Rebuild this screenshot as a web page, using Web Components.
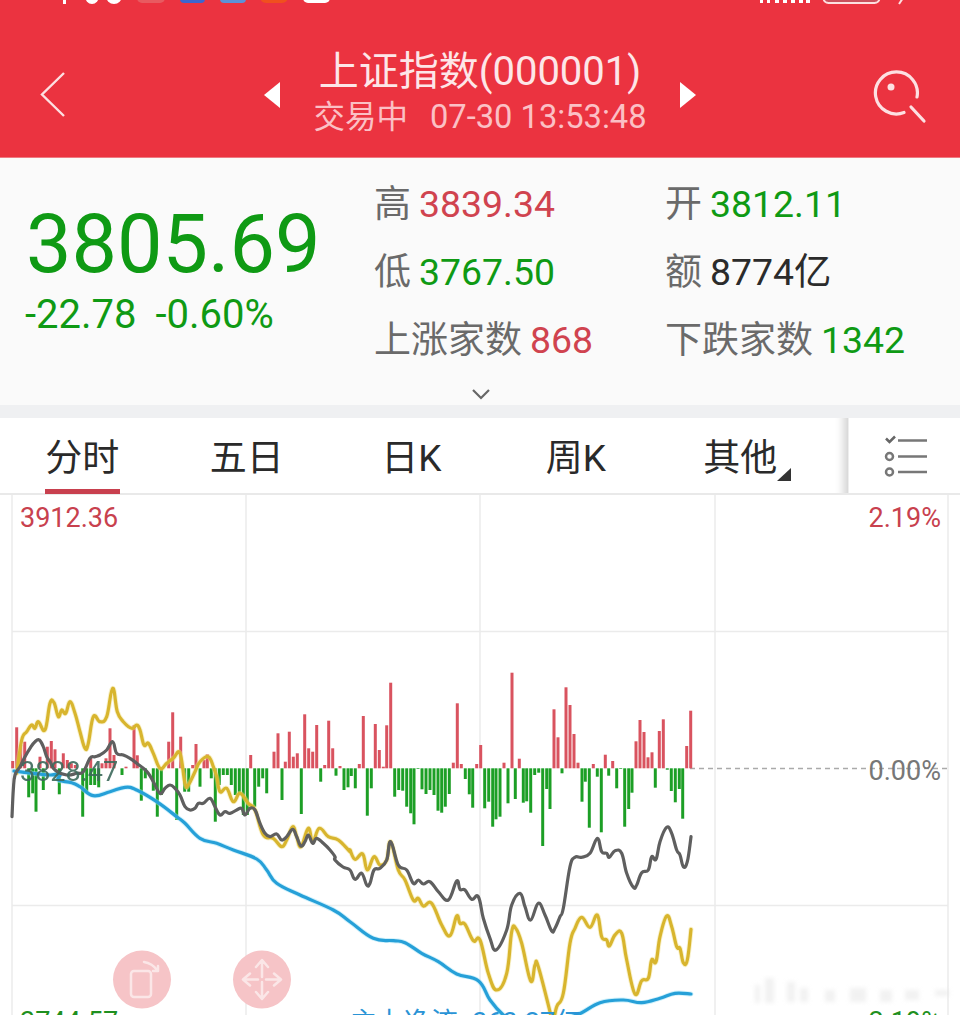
<!DOCTYPE html>
<html lang="zh"><head><meta charset="utf-8"><title>上证指数</title>
<style>
html,body{margin:0;padding:0;height:1015px;overflow:hidden;background:#fff;font-family:Roboto,"Noto Sans CJK SC",sans-serif}
body{display:flex;flex-direction:column}
</style></head><body>
<quote-header name="上证指数(000001)" state="交易中" time="07-30 13:53:48"></quote-header>
<quote-summary price="3805.69" delta="-22.78" pct="-0.60%">
  <stat-item label="高" value="3839.34" tone="up"></stat-item>
  <stat-item label="开" value="3812.11" tone="down"></stat-item>
  <stat-item label="低" value="3767.50" tone="down"></stat-item>
  <stat-item label="额" value="8774亿" tone="flat"></stat-item>
  <stat-item label="上涨家数" value="868" tone="up"></stat-item>
  <stat-item label="下跌家数" value="1342" tone="down"></stat-item>
</quote-summary>
<chart-tabs>
  <tab-item active>分时</tab-item>
  <tab-item>五日</tab-item>
  <tab-item>日K</tab-item>
  <tab-item>周K</tab-item>
  <tab-item menu>其他</tab-item>
</chart-tabs>
<intraday-chart></intraday-chart>
<script>
const FONT='Roboto,"Noto Sans CJK SC",sans-serif';
class QuoteHeader extends HTMLElement{
  connectedCallback(){
    const s=this.attachShadow({mode:'open'});
    s.innerHTML=`<style>
    :host{display:block;height:157px;background:#eb3340;border-bottom:1px solid #ee7a82;font-family:${FONT};flex:none}
    .status{display:block;height:5px}
    .row{display:grid;grid-template-columns:1fr auto 1fr;align-items:center;height:152px;padding:28px 33px 0 40px;box-sizing:border-box}
    .mid{display:flex;align-items:center;gap:33px;margin-left:-7px}
    .txt{display:flex;flex-direction:column;align-items:center;margin-bottom:4px}
    .t{font-size:40px;line-height:46px;color:#fde6e8;white-space:nowrap}
    .u{font-size:32.700px;line-height:40px;color:#fbc0c5;white-space:nowrap;margin-top:2px}
    .u span{margin-right:22px;font-size:31.500px}
    svg{display:block}
    .r{justify-self:end;margin-top:4px}
    </style>
    <svg class="status" width="960" height="5" viewBox="0 0 960 5">
      <g fill="#fff"><rect x="63" y="-4" width="3" height="8"/><ellipse cx="92" cy="-4" rx="7" ry="8"/><ellipse cx="114" cy="-4" rx="8" ry="8"/>
      <rect x="303" y="-10" width="27" height="13" rx="5"/></g>
      <rect x="137" y="-10" width="28" height="13" rx="5" fill="#e85a60"/>
      <rect x="180" y="-10" width="25" height="13" rx="4" fill="#3c66cf"/>
      <rect x="220" y="-10" width="26" height="13" rx="4" fill="#5c92d8"/>
      <rect x="260" y="-10" width="28" height="13" rx="6" fill="#f0501e"/>
      <g fill="#fff"><rect x="760" y="-3" width="3" height="6"/><rect x="767" y="-3" width="3" height="6"/><rect x="775" y="-3" width="4" height="6"/><rect x="783" y="-3" width="4" height="6"/><rect x="791" y="-3" width="4" height="6"/><rect x="799" y="-3" width="4" height="6"/><rect x="806" y="-3" width="4" height="6"/></g>
      <rect x="823.500" y="-10" width="56" height="13" rx="5" fill="#c9505c" stroke="#fde0e0" stroke-width="2"/>
      <path d="M903 -2L899 4" stroke="#fde0e0" stroke-width="2"/>
    </svg>
    <div class="row">
      <svg width="26" height="48" viewBox="40 72 26 48"><path d="M64 74L42 95.500L64 117" fill="none" stroke="#fde0e2" stroke-width="2.400"/></svg>
      <div class="mid">
        <svg width="16" height="26" viewBox="0 0 16 26"><path d="M16 0L0 13L16 26Z" fill="#fff"/></svg>
        <div class="txt"><div class="t">${this.getAttribute('name')}</div>
        <div class="u"><span>${this.getAttribute('state')}</span>${this.getAttribute('time')}</div></div>
        <svg width="16" height="26" viewBox="0 0 16 26"><path d="M0 0L16 13L0 26Z" fill="#fff"/></svg>
      </div>
      <svg class="r" width="54" height="54" viewBox="874 70 54 54"><path d="M918 97A21 21 0 1 0 905 112.500" fill="none" stroke="#fde0e2" stroke-width="3.200" stroke-linecap="round"/><circle cx="892" cy="87" r="3.500" fill="#fde0e2"/><path d="M912 107L925 121" stroke="#fde0e2" stroke-width="3.200" stroke-linecap="round"/></svg>
    </div>`;
  }
}
customElements.define('quote-header',QuoteHeader);

class QuoteSummary extends HTMLElement{
  connectedCallback(){
    const s=this.attachShadow({mode:'open'});
    s.innerHTML=`<style>
    :host{display:block;flex:none;background:#fafafa;font-family:${FONT};height:260px}
    .top{display:flex;padding-top:12px;box-sizing:border-box;height:228px}
    .l{width:375px;box-sizing:border-box;padding:29px 0 0 26px;color:#0f9a14}
    .p{font-size:81px;line-height:92px;white-space:nowrap}
    .c{font-size:40px;line-height:46px;margin-top:1px;white-space:nowrap;display:flex;gap:19px;margin-left:-1px}
    .g{display:grid;grid-template-columns:291px 1fr;grid-auto-rows:68px}
    .chev{display:flex;justify-content:center;height:15px;padding-bottom:4px;align-items:center;padding-left:1px}
    .bar{height:13px;background:#eff0f2}
    </style>
    <div class="top"><div class="l"><div class="p">${this.getAttribute('price')}</div>
    <div class="c"><span>${this.getAttribute('delta')}</span><span>${this.getAttribute('pct')}</span></div></div>
    <div class="g"><slot></slot></div></div>
    <div class="chev"><svg width="20" height="12" viewBox="0 0 20 12"><path d="M2 2L10 10L18 2" fill="none" stroke="#666" stroke-width="2.200"/></svg></div>
    <div class="bar"></div>`;
  }
}
customElements.define('quote-summary',QuoteSummary);

class StatItem extends HTMLElement{
  connectedCallback(){
    const s=this.attachShadow({mode:'open'});
    const tone={up:'#d0434f',down:'#0f9a14',flat:'#2b2b2b'}[this.getAttribute('tone')];
    s.innerHTML=`<style>
    :host{display:flex;align-items:baseline;white-space:nowrap;font-size:37.400px;line-height:68px;gap:8px;font-family:${FONT}}
    .a{color:#6a6a6a;font-size:37px;margin-left:-1px}.b{color:${tone}}
    </style><span class="a">${this.getAttribute('label')}</span><span class="b">${this.getAttribute('value')}</span>`;
  }
}
customElements.define('stat-item',StatItem);

class ChartTabs extends HTMLElement{
  connectedCallback(){
    const s=this.attachShadow({mode:'open'});
    s.innerHTML=`<style>
    :host{display:flex;flex:none;height:77px;box-sizing:border-box;background:#fff;border-bottom:2px solid #e9e9e9;font-family:${FONT}}
    .tabs{display:grid;grid-template-columns:repeat(5,164.500px);width:848px;flex:none;box-shadow:inset -14px 0 10px -10px #d0d0d0}
    .icon{flex:1;display:flex;align-items:center;justify-content:center;border-left:1px solid #eee;padding-left:5px}
    svg{display:block}
    </style><div class="tabs"><slot></slot></div>
    <div class="icon"><svg width="46" height="42" viewBox="884 435 46 42"><path d="M886 438.500L889.500 442L895 436.500" fill="none" stroke="#666" stroke-width="2.500"/><g stroke="#777" stroke-width="2.500" fill="none"><path d="M898 440.500H927M898 456.500H927M898 472H927"/><circle cx="889.500" cy="456.500" r="3.500"/><circle cx="889.500" cy="472" r="3.500"/></g></svg></div>`;
  }
}
customElements.define('chart-tabs',ChartTabs);

class TabItem extends HTMLElement{
  connectedCallback(){
    const s=this.attachShadow({mode:'open'});
    s.innerHTML=`<style>
    :host{display:flex;position:relative;justify-content:center;align-items:center;font-size:37px;color:#2a2a2a;height:75px;padding-bottom:2px;box-sizing:border-box;font-family:${FONT}}
    .line{position:absolute;left:45px;width:75px;bottom:-1px;height:5px;background:#c8404e}
    .tri{position:absolute;left:119px;top:50px;width:0;height:0;border-left:14px solid transparent;border-bottom:13px solid #333}
    </style><slot></slot>${this.hasAttribute('active')?'<div class="line"></div>':''}${this.hasAttribute('menu')?'<div class="tri"></div>':''}`;
  }
}
customElements.define('tab-item',TabItem);

const bars3=[[38,303],[50,202],[62,255],[74,245],[86,412],[98,400],[108,455],[120,290],[130,390],[142,260],[154,243],[165,268],[178,403],[190,280],[202,300],[214,310],[226,315],[248,470],[260,395],[272,295],[272,375],[284,375],[296,382],[306,310],[318,295],[330,205],[342,285],[366,345],[378,320],[402,196],[412,286],[424,422],[436,355],[460,392],[472,470],[484,405],[506,245],[518,157],[530,480],[542,230],[554,395],[566,395],[578,315],[588,252],[600,380],[612,300],[622,283],[634,355],[646,485],[658,375],[670,345],[682,345],[694,375],[706,405],[718,405],[730,465],[742,465],[752,285],[764,440],[776,380],[788,355],[800,400],[822,275],[834,220],[846,420],[856,305],[868,215],[880,290],[892,280],[904,462],[914,163],[926,265],[938,275],[950,195],[962,365],[974,315],[986,182],[998,265],[1008,347],[1020,318],[1032,390],[1044,382]];
const bars4=[[4,348],[16,385],[28,312],[40,168],[52,467],[64,385],[76,192],[88,270],[100,320],[110,196],[122,68],[134,410],[146,390],[158,392],[170,440],[182,460],[192,493],[204,327],[216,388],[228,402],[240,390],[252,405],[264,452],[275,458],[286,440],[298,402],[310,308],[322,130],[334,312],[346,357],[358,403],[368,443],[380,312],[392,255],[404,445],[416,425],[428,500],[438,478],[450,470],[462,308],[474,430],[486,38],[496,417],[508,296],[520,428],[530,424],[542,458],[554,345],[566,338],[578,558],[590,387],[600,447],[612,148],[624,232],[636,340],[648,82],[660,135],[672,222],[684,308],[696,425],[706,365],[718,503],[730,312],[742,350],[754,517],[766,284],[776,347],[788,303],[800,385],[812,327],[824,500],[836,447],[846,398],[858,244],[870,180],[882,216],[894,292],[906,277],[916,383],[928,213],[940,178],[952,329],[964,393],[976,427],[988,387],[998,476],[1010,258],[1022,152]];
const z=(a,ox,oy)=>a.map(([x,y])=>[ox+x/3,oy+y/3]);
const gray=[...z([[36,470],[40,390],[45,345],[60,320],[75,290],[90,265],[105,245],[118,240],[130,260],[140,290],[150,305],[165,330],[200,345],[230,340],[250,335],[270,295],[285,290],[300,285],[320,270],[338,245],[350,280],[370,285],[390,295],[410,310],[430,325],[445,340],[460,365],[480,400],[495,385],[510,375],[525,385],[540,405],[555,440],[570,450],[585,445],[595,430],[610,430],[630,415],[645,440],[660,465],[675,455],[690,460],[710,450],[725,445],[735,465],[750,445],[765,450],[780,490],[795,520],[810,530],[830,522],[845,540],[860,530],[878,508],[890,530],[903,558],[915,545],[925,525],[938,550],[950,535],[970,550],[990,570],[1005,590]],0,660),[335,860],[343,867],
...z([[0,150],[15,178],[35,160],[50,195],[60,190],[72,150],[90,145],[110,120],[122,65],[145,135],[170,150],[190,190],[205,180],[220,192],[240,185],[265,215],[295,240],[320,183],[330,208],[345,210],[365,238],[385,230],[400,295],[420,355],[438,390],[470,330],[485,255],[510,220],[525,260],[542,300],[565,250],[585,285],[605,333],[615,325],[630,290],[640,265],[660,140],[675,112],[695,112],[720,100],[742,55],[755,95],[770,100],[778,112],[795,92],[815,100],[830,160],[850,202],[860,195],[875,158],[895,150],[905,110],[918,118],[930,65],[950,22],[965,40],[980,90],[990,105],[1000,140],[1012,125],[1023,50]],350,820)];
const yellow=[...z([[50,340],[65,240],[80,215],[95,195],[105,205],[115,185],[135,210],[150,130],[162,128],[175,170],[185,150],[197,160],[210,125],[225,160],[240,215],[255,265],[265,250],[280,170],[300,185],[320,170],[338,85],[352,155],[370,185],[395,205],[410,195],[420,210],[432,255],[445,250],[460,280],[480,325],[500,310],[520,295],[540,280],[555,370],[565,375],[585,335],[600,305],[625,290],[640,320],[650,350],[660,395],[680,385],[700,425],[720,400],[745,430],[765,450],[790,525],[820,535],[845,560],[860,540],[878,500],[890,530],[903,560],[925,505],[938,545],[958,505],[985,530],[1015,540],[1050,575]],0,660),
...z([[0,90],[15,118],[38,102],[52,150],[72,110],[90,135],[110,120],[122,65],[145,150],[165,180],[190,240],[205,235],[220,258],[245,250],[275,315],[300,347],[320,288],[330,310],[345,313],[370,362],[390,360],[415,460],[440,510],[470,460],[485,335],[497,325],[515,370],[542,483],[555,435],[565,440],[600,575],[608,610],[620,560],[640,520],[660,370],[675,325],[695,292],[720,322],[742,285],[755,350],[770,360],[778,378],[795,345],[815,340],[830,420],[855,522],[875,482],[895,475],[905,420],[918,425],[930,350],[950,288],[965,320],[980,380],[990,385],[1000,428],[1012,420],[1023,328]],350,820)];
const blue=[[14,771],[30,773],[50,775],[60,774],
...z([[175,360],[215,368],[240,380],[280,407],[330,395],[375,382],[410,390],[470,425],[530,470],[555,490],[600,535],[650,550],[700,570],[770,597]],0,660),
...z([[800,150],[830,190],[900,225],[1000,270],[1050,305]],0,820),
...z([[70,355],[130,362],[165,368],[215,400],[265,425],[320,462],[385,482],[420,540],[460,585],[490,600],[540,590],[600,600],[680,585],[750,548],[820,540],[875,548],[930,535],[975,520],[1023,522]],350,820)];
const curve=a=>{let d='M'+a[0][0].toFixed(1)+' '+a[0][1].toFixed(1);const k=5;
  for(let i=0;i<a.length-1;i++){const p0=a[Math.max(i-1,0)],p1=a[i],p2=a[i+1],p3=a[Math.min(i+2,a.length-1)];
    d+=` C${(p1[0]+(p2[0]-p0[0])/k).toFixed(1)} ${(p1[1]+(p2[1]-p0[1])/k).toFixed(1)} ${(p2[0]-(p3[0]-p1[0])/k).toFixed(1)} ${(p2[1]-(p3[1]-p1[1])/k).toFixed(1)} ${p2[0].toFixed(1)} ${p2[1].toFixed(1)}`;}
  return d;};
const barSvg=(a,ox)=>a.map(([x,y])=>{const X=(ox+x/3-1.5).toFixed(1),Y=660+y/3,b=768.3;
  return Y<b?`<rect x="${X}" y="${Y.toFixed(1)}" width="3" height="${(b-Y).toFixed(1)}" fill="#d9535f"/>`:`<rect x="${X}" y="${b}" width="3" height="${(Y-b).toFixed(1)}" fill="#1f9f27"/>`}).join('');

class IntradayChart extends HTMLElement{
  connectedCallback(){
    const s=this.attachShadow({mode:'open'});
    s.innerHTML=`<style>
    :host{display:block;flex:1;min-height:0;overflow:hidden;background:#fff;font-family:${FONT}}
    svg{display:block}
    text{font-family:${FONT};font-size:27px}
    </style>
    <svg width="960" height="520" viewBox="0 495 960 520">
      <defs><filter id="b" x="-10%" y="-10%" width="120%" height="120%"><feGaussianBlur stdDeviation="2"/></filter>
      <filter id="s" filterUnits="userSpaceOnUse" x="0" y="495" width="960" height="530"><feGaussianBlur stdDeviation="0.400"/></filter></defs>
      <g stroke="#ebebeb" stroke-width="1.500" fill="none">
        <path d="M12 495V1015M246 495V1015M480 495V1015M715 495V1015M948 495V1015M12 631.500H948M12 905.500H948"/>
      </g>
      <path d="M690 768.500H948" stroke="#aaa" stroke-width="1.500" stroke-dasharray="5 4" fill="none"/>
      <g filter="url(#s)">
      <g>${barSvg(bars3,0)}${barSvg(bars4,350)}</g>
      <g fill="none" stroke-linejoin="round" stroke-linecap="round">
        <path d="${curve(yellow)}" stroke="#efe08a" stroke-width="5" opacity=".45"/>
        <path d="${curve(blue)}" stroke="#9fe3f7" stroke-width="5" opacity=".5"/>
        <path d="${curve(yellow)}" stroke="#d8b52f" stroke-width="3.200"/>
        <path d="${curve(blue)}" stroke="#27a0d8" stroke-width="3.200"/>
        <path d="${curve(gray)}" stroke="#5e5e5e" stroke-width="3.200"/>
      </g></g>
      <text x="20" y="527" fill="#c8414e">3912.36</text>
      <text x="941" y="527" fill="#c8414e" text-anchor="end">2.19%</text>
      <text x="20" y="781" fill="#3d6a5c" opacity=".9">3828.47</text>
      <text x="941" y="780" fill="#777" text-anchor="end">0.00%</text>
      <text x="20" y="1031" fill="#1f9020">3744.57</text>
      <text x="941" y="1031" fill="#1f9020" text-anchor="end">-2.19%</text>
      <text x="350" y="1032" fill="#2a94d6" style="font-size:27px">主力净流 -363.27亿</text>
      <g filter="url(#b)" fill="#e4e4e4" opacity=".5">
        <rect x="755" y="985" width="5" height="18"/><rect x="765" y="978" width="9" height="25"/><rect x="787" y="982" width="8" height="20"/><rect x="800" y="988" width="8" height="14"/><rect x="825" y="990" width="10" height="12"/><rect x="850" y="988" width="16" height="14"/><rect x="880" y="990" width="12" height="12"/><rect x="905" y="990" width="14" height="10"/><rect x="935" y="990" width="14" height="6"/>
      </g>
      <circle cx="142" cy="979.500" r="29" fill="#f6c4c7"/>
      <circle cx="262" cy="979.500" r="29" fill="#f6c4c7"/>
      <g fill="none" stroke="#fbe6e7" stroke-width="2.500" stroke-linecap="round" stroke-linejoin="round">
        <rect x="131" y="971" width="20" height="26" rx="3"/>
        <path d="M144 962Q152 963 158 971M158 966V971H153"/>
        <path d="M262 961V977M256 967L262 960L268 967M262 982V998M256 992L262 999L268 992M244 979.500H258M250 973.500L243 979.500L250 985.500M266 979.500H280M274 973.500L281 979.500L274 985.500"/>
      </g>
    </svg>`;
  }
}
customElements.define('intraday-chart',IntradayChart);
</script>
</body></html>
